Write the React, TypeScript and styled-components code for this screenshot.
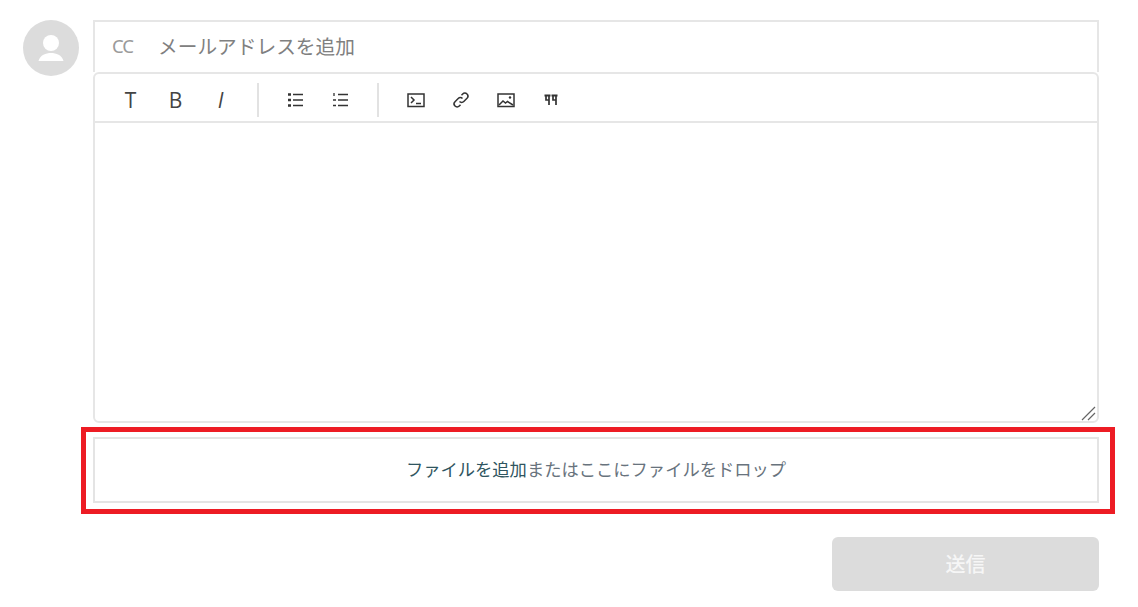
import React from "react";
import styled, { createGlobalStyle } from "styled-components";

const GlobalStyle = createGlobalStyle`
  html, body {
    margin: 0;
    background: #fff;
    font-family: "Noto Sans CJK JP", "Noto Sans", sans-serif;
  }
`;

const Page = styled.div`
  display: flex;
  align-items: flex-start;
  gap: 14px;
  padding: 20px 39px 0 23px;
`;

const Avatar = styled.div`
  flex: none;
  width: 56px;
  height: 56px;
  border-radius: 50%;
  background: #dcdcdc;
  display: flex;
  align-items: center;
  justify-content: center;
`;

const Main = styled.div`
  flex: 1;
  min-width: 0;
  display: flex;
  flex-direction: column;
`;

const CcRow = styled.div`
  box-sizing: border-box;
  height: 52px;
  display: flex;
  align-items: center;
  gap: 25px;
  padding: 0 0 3px 17px;
  border: 2px solid #e6e6e6;
  border-bottom: none;
`;

const CcLabel = styled.span`
  font-family: "Noto Sans", sans-serif;
  font-size: 18.5px;
  letter-spacing: -1px;
  color: #9a9a9a;
`;

const CcPlaceholder = styled.span`
  font-size: 19.7px;
  color: #808080;
`;

const Editor = styled.div`
  position: relative;
  box-sizing: border-box;
  border: 2px solid #e6e6e6;
  border-radius: 6px;
  display: flex;
  flex-direction: column;
`;

const Toolbar = styled.div`
  box-sizing: border-box;
  height: 49px;
  display: flex;
  align-items: center;
  padding-top: 5px;
  border-bottom: 2px solid #e6e6e6;
`;

const ToolGroup = styled.div<{ $first?: boolean }>`
  display: flex;
  height: 34px;
  padding: ${(p) => (p.$first ? "0 14px 0 13px" : "0 14px")};
  border-left: ${(p) => (p.$first ? "none" : "2px solid #e2e2e2")};
`;

const ToolButton = styled.button<{ $italic?: boolean }>`
  width: 45px;
  height: 34px;
  padding: 0;
  border: none;
  background: none;
  display: flex;
  align-items: center;
  justify-content: center;
  color: #444;
  font-family: "Open Sans", sans-serif;
  font-size: 21px;
  font-style: ${(p) => (p.$italic ? "italic" : "normal")};
`;

const Body = styled.textarea`
  display: block;
  box-sizing: border-box;
  width: 100%;
  height: 298px;
  border: none;
  outline: none;
  background: transparent;
  border-radius: 0 0 5px 5px;
  resize: none;
`;

const Grip = styled.svg`
  position: absolute;
  right: 1px;
  bottom: 0;
  width: 15px;
  height: 15px;
  stroke: #666;
  stroke-width: 1.2;
`;

const Dropzone = styled.div`
  position: relative;
  box-sizing: border-box;
  height: 66px;
  margin-top: 14px;
  padding-bottom: 3px;
  border: 2px solid #e4e4e4;
  display: flex;
  align-items: center;
  justify-content: center;
  font-size: 17.3px;
  color: #68737d;
`;

const DropLink = styled.span`
  color: #2f5560;
`;

const Highlight = styled.div`
  position: absolute;
  inset: -12px -18px -13px -14px;
  border: 5px solid #ed1c24;
  pointer-events: none;
`;

const Actions = styled.div`
  display: flex;
  justify-content: flex-end;
  margin-top: 34px;
`;

const SendButton = styled.button`
  width: 267px;
  height: 54px;
  padding: 0 0 2px;
  border: none;
  border-radius: 6px;
  background: #dcdcdc;
  color: #f6f6f6;
  font-family: inherit;
  font-size: 20px;
  font-weight: 500;
`;

const Icon = styled.svg`
  width: 20px;
  height: 20px;
  fill: none;
  stroke: #333;
  stroke-width: 1.5;
`;

export default function App() {
  return (
    <>
      <GlobalStyle />
      <Page>
        <Avatar>
          <svg width="26" height="28" viewBox="0 0 26 28">
            <circle cx="13" cy="9" r="8" fill="#fff" />
            <path d="M0.500 27C2 21 8 19 13 19S24 21 25.500 27z" fill="#fff" />
          </svg>
        </Avatar>
        <Main>
          <CcRow>
            <CcLabel>CC</CcLabel>
            <CcPlaceholder>メールアドレスを追加</CcPlaceholder>
          </CcRow>
          <Editor>
            <Toolbar>
              <ToolGroup $first>
                <ToolButton>T</ToolButton>
                <ToolButton>B</ToolButton>
                <ToolButton $italic>I</ToolButton>
              </ToolGroup>
              <ToolGroup>
                <ToolButton>
                  <Icon viewBox="0 0 20 20">
                    <path d="M7 4.500h10M7 10h10M7 15.500h10" />
                    <path d="M2 4.500h3M2 10h3M2 15.500h3" strokeWidth="2.500" />
                  </Icon>
                </ToolButton>
                <ToolButton>
                  <Icon viewBox="0 0 20 20">
                    <path d="M7 4.500h10M7 10h10M7 15.500h10" />
                    <path d="M3 3v3M2 10h3M2 15.500h3" strokeWidth="1.300" />
                  </Icon>
                </ToolButton>
              </ToolGroup>
              <ToolGroup>
                <ToolButton>
                  <Icon viewBox="0 0 20 20" strokeWidth="1.800">
                    <rect x="2" y="4" width="16" height="12.500" />
                    <path d="M5 7l3 3-3 3M10 13.500h5" />
                  </Icon>
                </ToolButton>
                <ToolButton>
                  <Icon viewBox="0 0 20 20" strokeWidth="1.800">
                    <path d="M8.500 11.500a3 3 0 0 0 4.300 0l3.200-3.200a3 3 0 0 0-4.300-4.300l-1.200 1.200" />
                    <path d="M11.500 8.500a3 3 0 0 0-4.300 0l-3.200 3.200a3 3 0 0 0 4.300 4.300l1.200-1.200" />
                  </Icon>
                </ToolButton>
                <ToolButton>
                  <Icon viewBox="0 0 20 20" strokeWidth="1.800">
                    <rect x="2" y="4" width="16" height="12.500" />
                    <path d="M3 15l4-4 2.500 2 2-1.500 5.500 3.500" />
                    <circle cx="14" cy="7.500" r="1.200" fill="#333" stroke="none" />
                  </Icon>
                </ToolButton>
                <ToolButton>
                  <Icon viewBox="0 0 20 20">
                    <path d="M3.500 5.500h6M10.500 5.500h6" strokeWidth="2" />
                    <path d="M5 6v4h3M8 6v9M12 6v4h3M15 6v9" strokeWidth="1.700" />
                  </Icon>
                </ToolButton>
              </ToolGroup>
            </Toolbar>
            <Body />
            <Grip viewBox="0 0 15 15">
              <path d="M1 14L14 1M7 14l7-7" />
            </Grip>
          </Editor>
          <Dropzone>
            <span>
              <DropLink>ファイルを追加</DropLink>またはここにファイルをドロップ
            </span>
            <Highlight />
          </Dropzone>
          <Actions>
            <SendButton>送信</SendButton>
          </Actions>
        </Main>
      </Page>
    </>
  );
}
